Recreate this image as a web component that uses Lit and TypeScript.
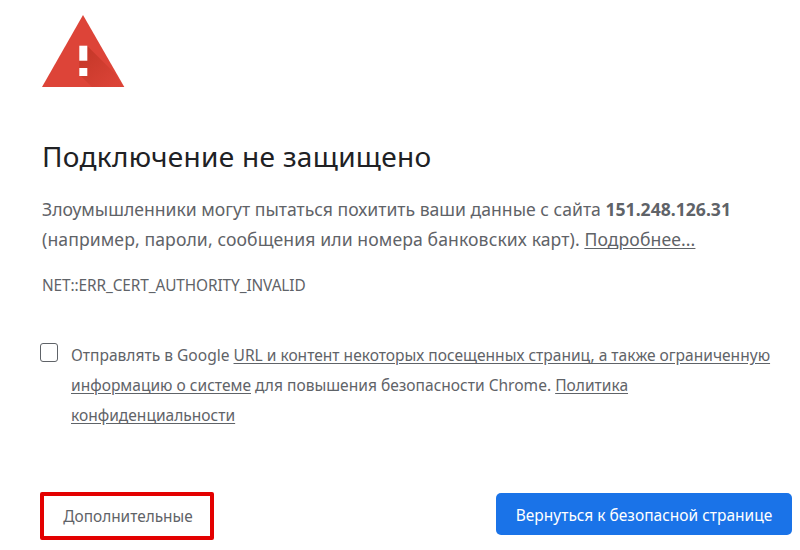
import { LitElement, html, css } from "lit";
import { customElement } from "lit/decorators.js";

@customElement("app-root")
export class AppRoot extends LitElement {
  static styles = css`
    :host { display: block; width: 800px; height: 550px; overflow: hidden; background: #fff; box-sizing: border-box; font-family: "Noto Sans", "Open Sans", sans-serif; color: #5f6368; }
    .page { display: flex; flex-direction: column; padding: 14px 8px 0 42px; height: 550px; box-sizing: border-box; }
    .icon { display: block; width: 84px; height: 74px; }
    h1 { margin: 50px 0 0; font-size: 28px; line-height: 36px; font-weight: 400; color: #202124; letter-spacing: 0.3px; }
    .msg { margin: 20px 0 0; font-size: 17.6px; line-height: 30px; white-space: nowrap; }
    .msg b { font-weight: 700; }
    .l2 { letter-spacing: 0.1px; }
    u { text-decoration: underline; text-underline-offset: 2px; }
    .code { margin-top: 21px; font-size: 15.4px; line-height: 22px; letter-spacing: -0.1px; }
    .opt { display: flex; margin: 43px 0 0 -2px; gap: 13px; }
    .box { width: 18px; height: 19px; box-sizing: border-box; border: 1px solid #5f6368; border-radius: 3px; flex: none; margin-top: 3px; }
    .opt p { margin: 0; font-size: 15.55px; line-height: 30px; width: 705px; }
    .opt .tight { letter-spacing: -0.03px; }
    .actions { display: flex; justify-content: space-between; align-items: flex-start; margin: 62px 0 0 -2px; }
    .adv { width: 174px; height: 48px; box-sizing: border-box; border: 4px solid #e30000; border-radius: 2px; padding-left: 2px; display: flex; align-items: center; justify-content: center; font-size: 15.4px; }
    .back { width: 296px; height: 42px; margin-top: 1px; padding-top: 1px; box-sizing: border-box; background: #1a73e8; color: #fff; border-radius: 5px; display: flex; align-items: center; justify-content: center; font-size: 15.5px; }
  `;
  render() {
    return html`<div class="page">
      <svg class="icon" viewBox="0 0 84 74" aria-hidden="true">
        <defs>
          <linearGradient id="sh" x1="0.15" y1="0.1" x2="0.85" y2="0.9">
            <stop offset="0" stop-color="#a52714" stop-opacity=".42"/>
            <stop offset="1" stop-color="#a52714" stop-opacity=".04"/>
          </linearGradient>
        </defs>
        <path d="M41 1 L82.3 73 H0 Z" fill="#dd4438"/>
        <path d="M45.3 32 L73 59.5 L81 73 H50 L37.3 60.5 V54 H45.3 V62 L37.3 54 V46.7 H45.3 Z" fill="url(#sh)"/>
        <rect x="37.3" y="31.7" width="8" height="15" fill="#fff"/>
        <rect x="37.3" y="54" width="8" height="8" fill="#fff"/>
      </svg>
      <h1>Подключение не защищено</h1>
      <p class="msg">Злоумышленники могут пытаться похитить ваши данные с сайта <b>151.248.126.31</b><br><span class="l2">(например, пароли, сообщения или номера банковских карт). <u>Подробнее...</u></span></p>
      <div class="code">NET::ERR_CERT_AUTHORITY_INVALID</div>
      <div class="opt">
        <div class="box"></div>
        <p>Отправлять в Google <u>URL и контент некоторых посещенных страниц, а также ограниченную информацию о системе</u> для повышения безопасности Chrome. <u>Политика конфиденциальности</u></p>
      </div>
      <div class="actions">
        <div class="adv">Дополнительные</div>
        <div class="back">Вернуться к безопасной странице</div>
      </div>
    </div>`;
  }
}
